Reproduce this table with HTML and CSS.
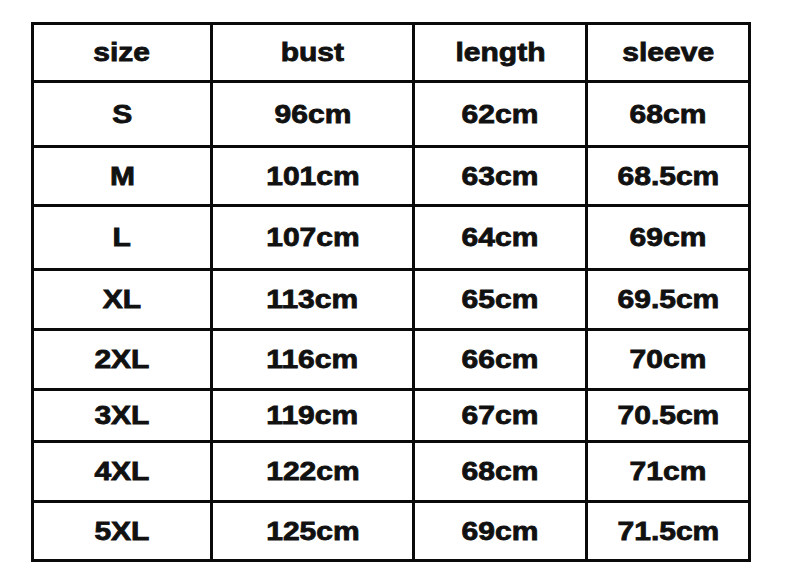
FILE: index.html
```html
<!DOCTYPE html>
<html>
<head>
<meta charset="utf-8">
<link rel="stylesheet" href="styles.css">
</head>
<body>
<div class="chart">
  <div class="cell"><span>size</span></div><div class="cell"><span>bust</span></div><div class="cell"><span>length</span></div><div class="cell"><span>sleeve</span></div>
  <div class="cell"><span>S</span></div><div class="cell"><span>96cm</span></div><div class="cell"><span>62cm</span></div><div class="cell"><span>68cm</span></div>
  <div class="cell"><span>M</span></div><div class="cell"><span>101cm</span></div><div class="cell"><span>63cm</span></div><div class="cell"><span>68.5cm</span></div>
  <div class="cell"><span>L</span></div><div class="cell"><span>107cm</span></div><div class="cell"><span>64cm</span></div><div class="cell"><span>69cm</span></div>
  <div class="cell"><span>XL</span></div><div class="cell"><span>113cm</span></div><div class="cell"><span>65cm</span></div><div class="cell"><span>69.5cm</span></div>
  <div class="cell"><span>2XL</span></div><div class="cell"><span>116cm</span></div><div class="cell"><span>66cm</span></div><div class="cell"><span>70cm</span></div>
  <div class="cell"><span>3XL</span></div><div class="cell"><span>119cm</span></div><div class="cell"><span>67cm</span></div><div class="cell"><span>70.5cm</span></div>
  <div class="cell"><span>4XL</span></div><div class="cell"><span>122cm</span></div><div class="cell"><span>68cm</span></div><div class="cell"><span>71cm</span></div>
  <div class="cell"><span>5XL</span></div><div class="cell"><span>125cm</span></div><div class="cell"><span>69cm</span></div><div class="cell"><span>71.5cm</span></div>
</div>
</body>
</html>
```
FILE: styles.css
```css
html, body {
  margin: 0;
  padding: 0;
  background: #fff;
}
body {
  width: 792px;
  height: 586px;
  overflow: hidden;
  font-family: "Liberation Sans", Arial, sans-serif;
}
.chart {
  margin: 22px 0 0 31px;
  width: 720px;
  box-sizing: border-box;
  display: grid;
  grid-template-columns: 176px 199px 170px 160px;
  grid-template-rows: 55px 62px 56px 61px 57px 57px 49px 57px 56px;
  gap: 3px;
  padding: 3px;
  background: #0a0a0a;
}
.cell {
  background: #fff;
  display: flex;
  align-items: center;
  justify-content: center;
}
.cell span {
  display: inline-block;
  font-weight: bold;
  font-size: 25px;
  color: #111;
  transform: scaleX(1.2);
  -webkit-text-stroke: 0.8px #111;
  line-height: 1;
}
```
